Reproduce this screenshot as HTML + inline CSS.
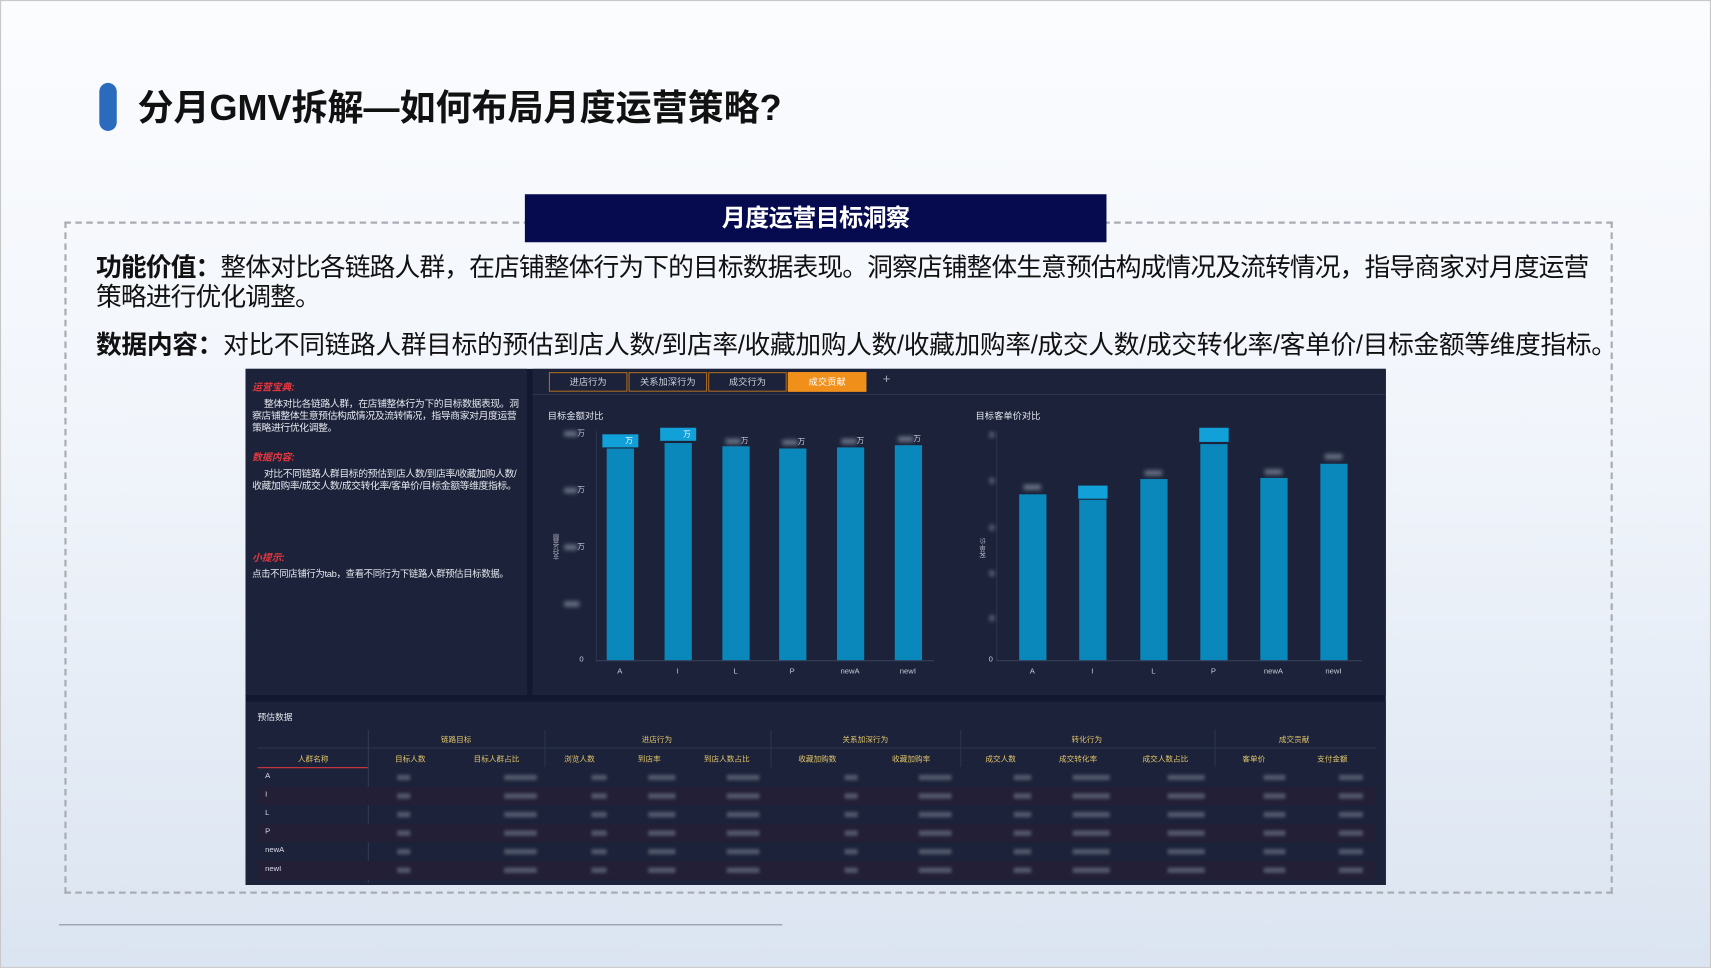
<!DOCTYPE html>
<html><head><meta charset="utf-8">
<style>
html,body{margin:0;padding:0;width:1711px;height:968px;overflow:hidden;background:#e9eff8}
#s{position:absolute;left:0;top:0;width:1568px;height:887px;transform:scale(1.0912);transform-origin:0 0;
background:linear-gradient(180deg,#fbfcfe 0%,#f1f5fb 45%,#dbe4f1 100%);font-family:"Liberation Sans","Noto Sans CJK SC",sans-serif;overflow:hidden;border:1px solid #c8c8c8;box-sizing:border-box}
.a{position:absolute;white-space:nowrap}
.bar{position:absolute;background:#0a88bc;width:25px}
.bl{position:absolute;height:5px;background:#8a93a5;filter:blur(2px);opacity:.7}
.lab{position:absolute;font-size:7px;color:#c8cdd8;transform:translateX(-50%)}
.tab{position:absolute;top:340px;height:18px;width:72px;border:1px solid #a86a20;box-sizing:border-box;font-size:8.5px;color:#cfd3dd;text-align:center;line-height:16px}
.th{position:absolute;font-size:7px;color:#e2c46a;transform:translateX(-50%)}
</style></head><body>
<div id="s">
<div class="a" style="left:90px;top:75px;width:16px;height:44px;border-radius:8px;background:#2a6bbd"></div>
<div class="a" style="left:125px;top:71px;font-size:33px;font-weight:bold;color:#111;letter-spacing:0px">分月GMV拆解—如何布局月度运营策略?</div>

<div class="a" style="left:58px;top:202px;width:1419px;height:616px;border:2px dashed #a9adb3;box-sizing:border-box"></div>
<div class="a" style="left:480px;top:177px;width:533px;height:44px;background:#060b4f;color:#fff;font-size:22px;font-weight:bold;text-align:center;line-height:43px;letter-spacing:-0.5px">月度运营目标洞察</div>

<div class="a" style="left:87px;top:232px;font-size:23.6px;color:#111;letter-spacing:-0.8px;line-height:27px"><b>功能价值：</b>整体对比各链路人群，在店铺整体行为下的目标数据表现。洞察店铺整体生意预估构成情况及流转情况，指导商家对月度运营<br>策略进行优化调整。</div>
<div class="a" style="left:87px;top:296px;font-size:23.6px;color:#111;letter-spacing:-0.32px"><b>数据内容：</b>对比不同链路人群目标的预估到店人数/到店率/收藏加购人数/收藏加购率/成交人数/成交转化率/客单价/目标金额等维度指标。</div>

<!-- dashboard -->
<div class="a" style="left:224px;top:337px;width:1045px;height:473px;background:#111830"></div>
<div class="a" style="left:224px;top:337px;width:258px;height:299px;background:#1b2239"></div>
<div class="a" style="left:487px;top:337px;width:782px;height:299px;background:#1b2239"></div>
<div class="a" style="left:224px;top:642px;width:1045px;height:168px;background:#1b2239"></div>

<div class="a" style="left:230px;top:347px;font-size:9px;color:#e8383d;font-style:italic;font-weight:bold">运营宝典:</div>
<div class="a" style="left:230px;top:364px;font-size:9px;color:#e6e8ee;line-height:11px;white-space:normal;width:246px;letter-spacing:-0.35px">　 整体对比各链路人群，在店铺整体行为下的目标数据表现。洞察店铺整体生意预估构成情况及流转情况，指导商家对月度运营策略进行优化调整。</div>
<div class="a" style="left:230px;top:411px;font-size:9px;color:#e8383d;font-style:italic;font-weight:bold">数据内容:</div>
<div class="a" style="left:230px;top:428px;font-size:9px;color:#e6e8ee;line-height:11px;white-space:normal;width:246px;letter-spacing:-0.35px">　 对比不同链路人群目标的预估到店人数/到店率/收藏加购人数/收藏加购率/成交人数/成交转化率/客单价/目标金额等维度指标。</div>
<div class="a" style="left:230px;top:503px;font-size:9px;color:#e8383d;font-style:italic;font-weight:bold">小提示:</div>
<div class="a" style="left:230px;top:519px;font-size:8.6px;color:#e6e8ee;letter-spacing:-0.3px">点击不同店铺行为tab，查看不同行为下链路人群预估目标数据。</div>

<div class="tab" style="left:502px">进店行为</div>
<div class="tab" style="left:575px">关系加深行为</div>
<div class="tab" style="left:648px">成交行为</div>
<div class="tab" style="left:721px;background:#f0901a;border-color:#f0901a;color:#fff">成交贡献</div>
<div class="a" style="left:808px;top:339px;font-size:12px;color:#aab">+</div>
<div class="a" style="left:487px;top:360px;width:782px;height:1px;background:#2c3550"></div>

<div class="a" style="left:501px;top:374px;font-size:8.5px;color:#e6e8ee">目标金额对比</div>
<div class="a" style="left:893px;top:374px;font-size:8.5px;color:#e6e8ee">目标客单价对比</div>
<div class="a" style="left:545px;top:604px;width:310px;height:1px;background:#38415a"></div>
<div class="a" style="left:912px;top:604px;width:335px;height:1px;background:#38415a"></div>
<div class="a" style="left:545px;top:394px;width:1px;height:210px;background:#2c3550"></div>
<div class="a" style="left:912px;top:394px;width:1px;height:210px;background:#2c3550"></div>
<div class="a" style="left:530px;top:600px;font-size:7px;color:#ccd">0</div>
<div class="a" style="left:905px;top:600px;font-size:7px;color:#ccd">0</div>
<div class="bl" style="left:516px;top:394px;width:12px"></div><div class="a" style="left:528px;top:391px;font-size:7px;color:#ccd">万</div>
<div class="bl" style="left:516px;top:446px;width:12px"></div><div class="a" style="left:528px;top:443px;font-size:7px;color:#ccd">万</div>
<div class="bl" style="left:516px;top:498px;width:12px"></div><div class="a" style="left:528px;top:495px;font-size:7px;color:#ccd">万</div>
<div class="bl" style="left:516px;top:550px;width:14px"></div>
<div class="bl" style="left:906px;top:395px;width:4px"></div><div class="bl" style="left:906px;top:437px;width:4px"></div><div class="bl" style="left:906px;top:480px;width:4px"></div><div class="bl" style="left:906px;top:522px;width:4px"></div><div class="bl" style="left:906px;top:563px;width:4px"></div>
<div class="a" style="left:505px;top:488px;font-size:6px;color:#aab;writing-mode:vertical-rl;transform:rotate(180deg)">支付金额</div>
<div class="a" style="left:896px;top:492px;font-size:6px;color:#aab;writing-mode:vertical-rl;transform:rotate(180deg)">客单价</div>

<div class="bar" style="left:555px;top:410px;height:194px"></div>
<div class="bar" style="left:608px;top:405px;height:199px"></div>
<div class="bar" style="left:661px;top:408px;height:196px"></div>
<div class="bar" style="left:713px;top:410px;height:194px"></div>
<div class="bar" style="left:766px;top:409px;height:195px"></div>
<div class="bar" style="left:819px;top:407px;height:197px"></div>
<div class="a" style="left:551px;top:397px;width:33px;height:12px;background:#12a0d8"></div><div class="a" style="left:572px;top:398px;font-size:7px;color:#fff">万</div>
<div class="a" style="left:604px;top:391px;width:33px;height:12px;background:#12a0d8"></div><div class="a" style="left:625px;top:392px;font-size:7px;color:#fff">万</div>
<div class="bl" style="left:664px;top:401px;width:14px"></div><div class="a" style="left:678px;top:398px;font-size:7px;color:#ccd">万</div>
<div class="bl" style="left:716px;top:402px;width:14px"></div><div class="a" style="left:730px;top:399px;font-size:7px;color:#ccd">万</div>
<div class="bl" style="left:770px;top:401px;width:14px"></div><div class="a" style="left:784px;top:398px;font-size:7px;color:#ccd">万</div>
<div class="bl" style="left:822px;top:399px;width:14px"></div><div class="a" style="left:836px;top:396px;font-size:7px;color:#ccd">万</div>

<div class="bar" style="left:933px;top:452px;height:152px"></div>
<div class="bar" style="left:988px;top:457px;height:147px"></div>
<div class="bar" style="left:1044px;top:438px;height:166px"></div>
<div class="bar" style="left:1099px;top:406px;height:198px"></div>
<div class="bar" style="left:1154px;top:437px;height:167px"></div>
<div class="bar" style="left:1209px;top:424px;height:180px"></div>
<div class="a" style="left:987px;top:444px;width:27px;height:12px;background:#12a0d8"></div>
<div class="a" style="left:1098px;top:391px;width:27px;height:13px;background:#12a0d8"></div>
<div class="bl" style="left:937px;top:443px;width:16px"></div>
<div class="bl" style="left:1048px;top:430px;width:16px"></div>
<div class="bl" style="left:1158px;top:429px;width:16px"></div>
<div class="bl" style="left:1213px;top:415px;width:16px"></div>

<div class="lab" style="left:567px;top:611px">A</div><div class="lab" style="left:620px;top:611px">I</div><div class="lab" style="left:673px;top:611px">L</div><div class="lab" style="left:725px;top:611px">P</div><div class="lab" style="left:778px;top:611px">newA</div><div class="lab" style="left:831px;top:611px">newI</div>
<div class="lab" style="left:945px;top:611px">A</div><div class="lab" style="left:1000px;top:611px">I</div><div class="lab" style="left:1056px;top:611px">L</div><div class="lab" style="left:1111px;top:611px">P</div><div class="lab" style="left:1166px;top:611px">newA</div><div class="lab" style="left:1221px;top:611px">newI</div>

<!-- table -->
<div class="a" style="left:235px;top:651px;font-size:8px;color:#e6e8ee">预估数据</div>
<div class="a" style="left:235px;top:684px;width:1025px;height:1px;background:#2c3550"></div>
<div class="a" style="left:336px;top:668px;width:1px;height:140px;background:#323b55"></div>
<div class="a" style="left:498px;top:668px;width:1px;height:34px;background:#2c3550"></div>
<div class="a" style="left:705px;top:668px;width:1px;height:34px;background:#2c3550"></div>
<div class="a" style="left:879px;top:668px;width:1px;height:34px;background:#2c3550"></div>
<div class="a" style="left:1112px;top:668px;width:1px;height:34px;background:#2c3550"></div>
<div class="th" style="left:417px;top:672px">链路目标</div><div class="th" style="left:601px;top:672px">进店行为</div><div class="th" style="left:792px;top:672px">关系加深行为</div><div class="th" style="left:995px;top:672px">转化行为</div><div class="th" style="left:1185px;top:672px">成交贡献</div>
<div class="th" style="left:286px;top:690px">人群名称</div>
<div class="th" style="left:375px;top:690px">目标人数</div><div class="th" style="left:454px;top:690px">目标人群占比</div><div class="th" style="left:530px;top:690px">浏览人数</div><div class="th" style="left:594px;top:690px">到店率</div><div class="th" style="left:665px;top:690px">到店人数占比</div><div class="th" style="left:748px;top:690px">收藏加购数</div><div class="th" style="left:834px;top:690px">收藏加购率</div><div class="th" style="left:916px;top:690px">成交人数</div><div class="th" style="left:987px;top:690px">成交转化率</div><div class="th" style="left:1067px;top:690px">成交人数占比</div><div class="th" style="left:1148px;top:690px">客单价</div><div class="th" style="left:1220px;top:690px">支付金额</div>
<div class="a" style="left:235px;top:702px;width:101px;height:1px;background:#d9393f"></div>
<div class="a" style="left:235px;top:720px;width:1025px;height:17px;background:#221f36"></div>
<div class="a" style="left:235px;top:754px;width:1025px;height:17px;background:#221f36"></div>
<div class="a" style="left:235px;top:788px;width:1025px;height:17px;background:#221f36"></div>
<div class="a" style="left:242px;top:707px;font-size:7px;color:#dde">A</div>
<div class="a" style="left:242px;top:724px;font-size:7px;color:#dde">I</div>
<div class="a" style="left:242px;top:741px;font-size:7px;color:#dde">L</div>
<div class="a" style="left:242px;top:758px;font-size:7px;color:#dde">P</div>
<div class="a" style="left:242px;top:775px;font-size:7px;color:#dde">newA</div>
<div class="a" style="left:242px;top:792px;font-size:7px;color:#dde">newI</div>
<svg class="a" style="left:0;top:0" width="1568" height="887">
<g fill="#7d8596" opacity=".55" style="filter:blur(1.5px)">
<rect x="363" y="709" width="12" height="5"/><rect x="461" y="709" width="30" height="5"/><rect x="541" y="709" width="14" height="5"/><rect x="593" y="709" width="25" height="5"/><rect x="665" y="709" width="30" height="5"/><rect x="773" y="709" width="12" height="5"/><rect x="841" y="709" width="30" height="5"/><rect x="928" y="709" width="16" height="5"/><rect x="982" y="709" width="34" height="5"/><rect x="1069" y="709" width="34" height="5"/><rect x="1157" y="709" width="20" height="5"/><rect x="1226" y="709" width="22" height="5"/>
<rect x="363" y="726" width="12" height="5"/><rect x="461" y="726" width="30" height="5"/><rect x="541" y="726" width="14" height="5"/><rect x="593" y="726" width="25" height="5"/><rect x="665" y="726" width="30" height="5"/><rect x="773" y="726" width="12" height="5"/><rect x="841" y="726" width="30" height="5"/><rect x="928" y="726" width="16" height="5"/><rect x="982" y="726" width="34" height="5"/><rect x="1069" y="726" width="34" height="5"/><rect x="1157" y="726" width="20" height="5"/><rect x="1226" y="726" width="22" height="5"/>
<rect x="363" y="743" width="12" height="5"/><rect x="461" y="743" width="30" height="5"/><rect x="541" y="743" width="14" height="5"/><rect x="593" y="743" width="25" height="5"/><rect x="665" y="743" width="30" height="5"/><rect x="773" y="743" width="12" height="5"/><rect x="841" y="743" width="30" height="5"/><rect x="928" y="743" width="16" height="5"/><rect x="982" y="743" width="34" height="5"/><rect x="1069" y="743" width="34" height="5"/><rect x="1157" y="743" width="20" height="5"/><rect x="1226" y="743" width="22" height="5"/>
<rect x="363" y="760" width="12" height="5"/><rect x="461" y="760" width="30" height="5"/><rect x="541" y="760" width="14" height="5"/><rect x="593" y="760" width="25" height="5"/><rect x="665" y="760" width="30" height="5"/><rect x="773" y="760" width="12" height="5"/><rect x="841" y="760" width="30" height="5"/><rect x="928" y="760" width="16" height="5"/><rect x="982" y="760" width="34" height="5"/><rect x="1069" y="760" width="34" height="5"/><rect x="1157" y="760" width="20" height="5"/><rect x="1226" y="760" width="22" height="5"/>
<rect x="363" y="777" width="12" height="5"/><rect x="461" y="777" width="30" height="5"/><rect x="541" y="777" width="14" height="5"/><rect x="593" y="777" width="25" height="5"/><rect x="665" y="777" width="30" height="5"/><rect x="773" y="777" width="12" height="5"/><rect x="841" y="777" width="30" height="5"/><rect x="928" y="777" width="16" height="5"/><rect x="982" y="777" width="34" height="5"/><rect x="1069" y="777" width="34" height="5"/><rect x="1157" y="777" width="20" height="5"/><rect x="1226" y="777" width="22" height="5"/>
<rect x="363" y="794" width="12" height="5"/><rect x="461" y="794" width="30" height="5"/><rect x="541" y="794" width="14" height="5"/><rect x="593" y="794" width="25" height="5"/><rect x="665" y="794" width="30" height="5"/><rect x="773" y="794" width="12" height="5"/><rect x="841" y="794" width="30" height="5"/><rect x="928" y="794" width="16" height="5"/><rect x="982" y="794" width="34" height="5"/><rect x="1069" y="794" width="34" height="5"/><rect x="1157" y="794" width="20" height="5"/><rect x="1226" y="794" width="22" height="5"/>
</g></svg>

<div class="a" style="left:53px;top:846px;width:663px;height:1px;background:#8e939b"></div>
</div>
</body></html>
